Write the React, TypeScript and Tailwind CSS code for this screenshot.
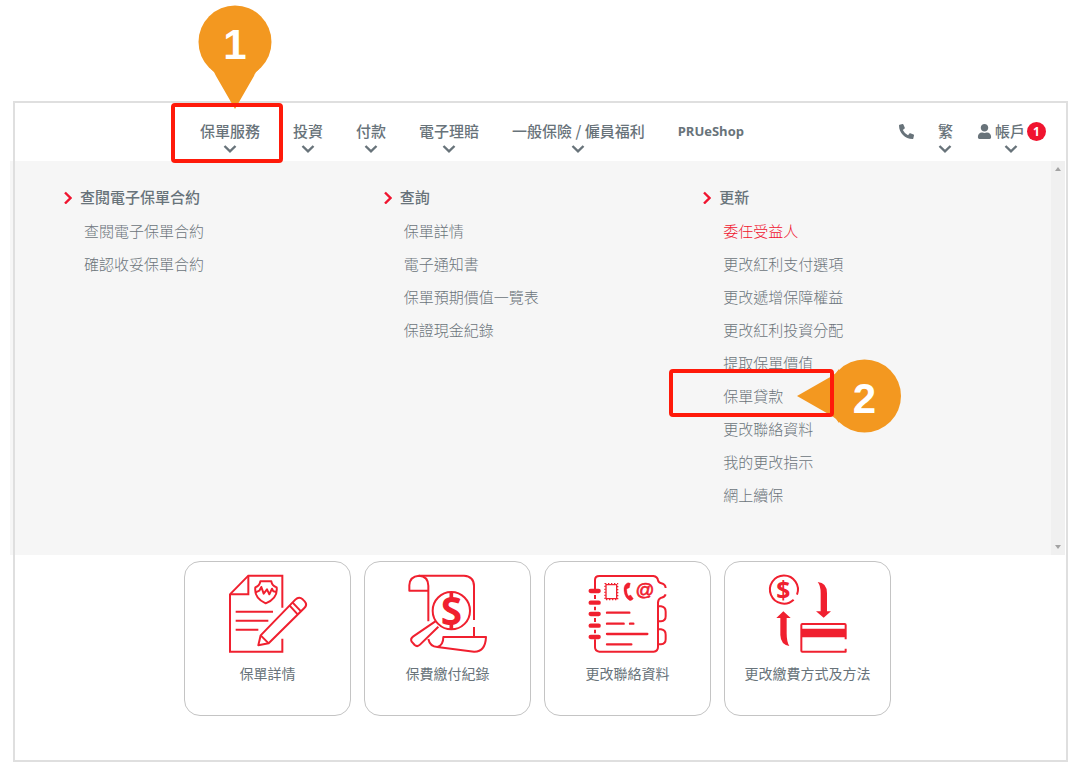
import type { ReactNode } from 'react';
import clsx from 'clsx';
import { FaPhoneAlt, FaUser } from 'react-icons/fa';

interface NavItem {
  label: string;
  hasMenu: boolean;
  step?: boolean;
}

interface MenuLink {
  label: string;
  active?: boolean;
  step?: boolean;
}

interface MenuGroup {
  title: string;
  links: MenuLink[];
}

const navItems: NavItem[] = [
  { label: '保單服務', hasMenu: true, step: true },
  { label: '投資', hasMenu: true },
  { label: '付款', hasMenu: true },
  { label: '電子理賠', hasMenu: true },
  { label: '一般保險 / 僱員福利', hasMenu: true },
  { label: 'PRUeShop', hasMenu: false },
];

const menuGroups: MenuGroup[] = [
  {
    title: '查閱電子保單合約',
    links: [{ label: '查閱電子保單合約' }, { label: '確認收妥保單合約' }],
  },
  {
    title: '查詢',
    links: [
      { label: '保單詳情' },
      { label: '電子通知書' },
      { label: '保單預期價值一覽表' },
      { label: '保證現金紀錄' },
    ],
  },
  {
    title: '更新',
    links: [
      { label: '委任受益人', active: true },
      { label: '更改紅利支付選項' },
      { label: '更改遞增保障權益' },
      { label: '更改紅利投資分配' },
      { label: '提取保單價值' },
      { label: '保單貸款', step: true },
      { label: '更改聯絡資料' },
      { label: '我的更改指示' },
      { label: '網上續保' },
    ],
  },
];

const ChevronDown = () => (
  <svg viewBox="0 0 14 8" className="w-[14px] h-2" fill="none" stroke="currentColor" strokeWidth="2.4">
    <path d="M1.5 1 L7 6.3 L12.5 1" />
  </svg>
);

const ChevronRight = () => (
  <svg viewBox="0 0 8 14" className="w-2 h-[14px] text-[#f0142f]" fill="none" stroke="currentColor" strokeWidth="2.4">
    <path d="M1 2.5 L6.5 8 L1 13.5" />
  </svg>
);

const IconFrame = ({ children }: { children: ReactNode }) => (
  <svg
    viewBox="138 72 252 240"
    className="w-[84px] h-20 overflow-visible text-[#f0202f]"
    fill="none"
    stroke="currentColor"
    strokeWidth="6"
    strokeLinejoin="round"
    aria-hidden="true"
  >
    {children}
  </svg>
);

const PolicyIcon = () => (
  <IconFrame>
    <path d="M307 173 V77 H205 L150 133 V305 H307 V266" strokeLinejoin="miter" />
    <path d="M205 77 V133 H150" strokeLinejoin="miter" />
    <path d="M167 185 H279 M167 212 H265 M167 239 H235" />
    <path d="M241 94 H274 Q276 107 290 112 Q294 145 257 160 Q222 145 226 112 Q239 107 241 94 Z" />
    <path d="M227 127 L238 122 L244 111 L251 131 L261 118 L268 133 L276 116 L280 124 L290 126" />
    <path d="M235 286 L242 256 L346 149 Q357 138 368 148 L374 154 Q383 164 373 174 L266 280 Z" />
    <path d="M242 256 L266 280 M329 167 L353 193 M338 158 L363 184" />
  </IconFrame>
);

const PaymentRecordIcon = () => (
  <IconFrame>
    <path d="M205 214 V107 Q204 78 177 77 Q149 79 148 106 V122 H205" />
    <path d="M177 77 H312 Q342 79 342 108 V210 M342 231 V260" />
    <circle cx="274" cy="182" r="56" />
    <path d="M274 127 V146 M274 219 V238" strokeWidth="11" />
    <text
      x="274"
      y="224"
      textAnchor="middle"
      fontSize="116"
      stroke="none"
      fill="currentColor"
      className="font-['Open_Sans'] font-bold"
    >
      S
    </text>
    <path d="M226 214 L160 259 Q150 266 155 275 L164 285 Q172 292 180 284 L235 230" />
    <path d="M205 267 Q210 290 232 291 L342 305 Q376 306 378 261 H250 Q250 286 232 291" />
  </IconFrame>
);

const ContactIcon = () => (
  <IconFrame>
    <path d="M165 118 V90 Q165 78 178 78 H340 Q353 80 354 91 Q356 99 364 100 Q376 103 377 114" />
    <path d="M377 133 Q374 142 364 143 Q354 147 354 158 V291 Q354 304 341 305 H178 Q165 304 165 292 V268" />
    <path d="M165 135 V147 M165 170 V181 M165 204 V216 M165 239 V250" />
    <path
      d="M152 123 H176 M152 158 H176 M152 192 H176 M152 227 H176 M152 261 H176"
      strokeWidth="13"
      strokeLinecap="round"
    />
    <path d="M354 169 H363 Q377 171 377 185 V199 Q377 213 363 214 H354" />
    <path d="M354 238 H363 Q377 240 377 254 V268 Q377 282 363 283 H354" />
    <rect x="198" y="104" width="32" height="42" strokeWidth="4" />
    <rect x="195" y="101" width="38" height="48" strokeWidth="4" strokeDasharray="4 5" />
    <path
      d="M264 98 Q250 104 252 122 Q254 143 270 152 Q277 151 280 146 L272 135 L265 138 Q260 131 260 117 L268 113 L271 100 Z"
      fill="currentColor"
      strokeWidth="1"
    />
    <text
      x="315"
      y="139"
      textAnchor="middle"
      fontSize="56"
      strokeWidth="2"
      fill="currentColor"
      className="font-['Liberation_Sans'] font-normal"
    >
      @
    </text>
    <path d="M201 188 H268 M201 221 H251 M270 221 H280 M201 252 H322 M201 283 H274" strokeWidth="7" strokeLinecap="round" />
  </IconFrame>
);

const PaymentMethodIcon = () => (
  <IconFrame>
    <path d="M231 134 A42 42 0 1 0 221 149" />
    <text
      x="190"
      y="146"
      textAnchor="middle"
      fontSize="74"
      stroke="none"
      fill="currentColor"
      className="font-['Open_Sans'] font-bold"
    >
      $
    </text>
    <path
      d="M293 96 Q321 98 321 130 V184 H333 L311 203 L288 184 H302 V130 Q302 106 293 96 Z"
      fill="currentColor"
      stroke="none"
    />
    <path
      d="M190 184 L212 204 H200 V250 Q200 276 208 288 Q182 284 181 255 V204 H169 Z"
      fill="currentColor"
      stroke="none"
    />
    <path d="M377 268 V225 Q377 222 374 222 H247 Q244 222 244 225 V302 Q244 305 247 305 H377 V296" />
    <path d="M244 249 H377" strokeWidth="25" />
  </IconFrame>
);

const cards = [
  { label: '保單詳情', Icon: PolicyIcon },
  { label: '保費繳付紀錄', Icon: PaymentRecordIcon },
  { label: '更改聯絡資料', Icon: ContactIcon },
  { label: '更改繳費方式及方法', Icon: PaymentMethodIcon },
];

// Step 1: pin pointing down at the nav entry, with its frame
const StepOne = () => (
  <>
    <div className="absolute z-10 -top-[116px] left-[-2px] w-[74px] h-[104px]">
      <svg viewBox="0 0 74 104" className="w-full h-full text-[#f39820]" fill="currentColor">
        <circle cx="37" cy="37" r="36.5" />
        <path d="M13 64 Q17 67 18 71 L37 104 L56 71 Q57 67 61 64 Z" />
      </svg>
      <span className="absolute inset-x-0 top-4 text-center text-[42px] leading-[48px] font-bold text-white font-['Liberation_Sans',sans-serif]">
        1
      </span>
    </div>
    <div className="absolute z-10 -top-[18px] -left-[29px] w-[112px] h-[60px] border-4 border-[#ff1a0a] rounded" />
  </>
);

// Step 2: pin pointing left at the menu entry, with its frame
const StepTwo = () => (
  <>
    <div className="absolute z-10 -top-5 left-[74px] w-[104px] h-[74px]">
      <svg viewBox="0 0 104 74" className="w-full h-full text-[#f39820]" fill="currentColor">
        <circle cx="67.5" cy="37" r="36.5" />
        <path d="M0 37 L35 17 Q39 15 42 10 V64 Q39 59 35 57 Z" />
      </svg>
      <span className="absolute right-0 top-4 w-[74px] text-center text-[42px] leading-[48px] font-bold text-white font-['Liberation_Sans',sans-serif]">
        2
      </span>
    </div>
    <div className="absolute z-10 -top-[10px] -left-[54px] w-[165px] h-12 border-4 border-[#ff1a0a] rounded" />
  </>
);

const Header = () => (
  <header className="flex justify-between pt-[18px] pb-2 pl-[185px] pr-5 text-[15px] leading-5 font-medium text-[#68737a]">
    <nav className="flex items-start gap-[33px]">
      {navItems.map((item) => (
        <div key={item.label} className="relative">
          <button
            type="button"
            className={clsx(
              'flex flex-col items-center gap-1 whitespace-nowrap',
              !item.hasMenu && "text-[13px] font-bold font-['Open_Sans',sans-serif]"
            )}
          >
            {item.label}
            {item.hasMenu && <ChevronDown />}
          </button>
          {item.step && <StepOne />}
        </div>
      ))}
    </nav>

    <div className="flex items-start gap-6">
      <button type="button" aria-label="電話" className="flex h-5 items-center">
        <FaPhoneAlt size={15} />
      </button>
      <button type="button" className="flex flex-col items-center gap-1">
        繁
        <ChevronDown />
      </button>
      <button type="button" className="flex flex-col items-center gap-1">
        <span className="flex items-center">
          <FaUser size={15} className="mr-[3px]" />
          帳戶
          <span className="ml-[2px] w-[19px] h-[19px] rounded-full bg-[#f0142f] text-center text-xs leading-[19px] font-bold text-white font-['Open_Sans',sans-serif]">
            1
          </span>
        </span>
        <ChevronDown />
      </button>
    </div>
  </header>
);

const MegaMenu = () => (
  <section className="-ml-[5px] mr-px pl-[3px] bg-[#f6f6f6]">
    <div className="flex border-l-2 border-[#dfdfdf]">
      <div className="grid flex-1 grid-cols-3 pt-6 pb-11 pl-[49px] pr-7">
        {menuGroups.map((group) => (
          <div key={group.title}>
            <h2 className="flex items-center gap-2 h-6 text-[15px] font-medium text-[#68737a]">
              <ChevronRight />
              {group.title}
            </h2>
            <ul className="mt-[5px] ml-5 text-[15px] leading-[33px] font-light text-[#6b747a]">
              {group.links.map((link) => (
                <li key={link.label} className="relative">
                  <a href="#" className={clsx(link.active && 'text-[#f0142f]')}>
                    {link.label}
                  </a>
                  {link.step && <StepTwo />}
                </li>
              ))}
            </ul>
          </div>
        ))}
      </div>
      <div className="flex w-[14px] flex-col items-center justify-between bg-[#f0f0f0] py-[6px] text-[#a3a3a3]">
        <svg viewBox="0 0 6 4" className="w-[6px] h-1" fill="currentColor">
          <path d="M3 0 L6 4 H0 Z" />
        </svg>
        <svg viewBox="0 0 6 4" className="w-[6px] h-1" fill="currentColor">
          <path d="M3 4 L6 0 H0 Z" />
        </svg>
      </div>
    </div>
  </section>
);

export default function App() {
  return (
    <div className="bg-white pt-[101px] pb-[10px] pl-[13px] pr-3 font-['Noto_Sans_CJK_TC',sans-serif]">
      <main className="border-2 border-[#dfdfdf]">
        <Header />
        <MegaMenu />
        <section className="pt-[6px] pb-11 pr-[6px]">
          <div className="mx-auto grid max-w-[707px] grid-cols-4 gap-[13px]">
            {cards.map(({ label, Icon }) => (
              <a
                key={label}
                href="#"
                className="flex flex-col items-center rounded-2xl border border-[#c4c4c4] pt-3 pb-8 text-sm leading-5 text-[#68737a]"
              >
                <Icon />
                <span className="mt-[9px] whitespace-nowrap">{label}</span>
              </a>
            ))}
          </div>
        </section>
      </main>
    </div>
  );
}
